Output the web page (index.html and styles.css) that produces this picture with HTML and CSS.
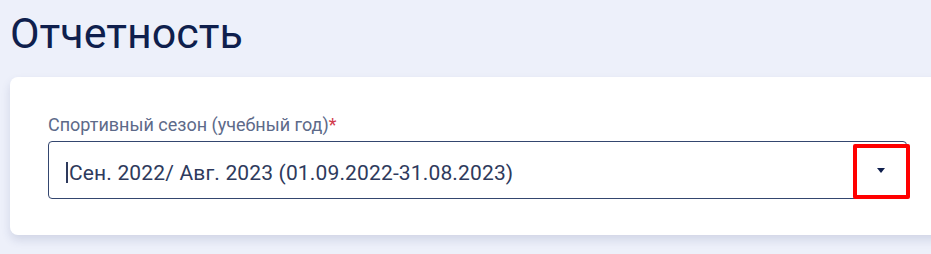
FILE: index.html
```html
<!DOCTYPE html>
<html lang="ru">
<head>
    <meta charset="UTF-8">
    <meta name="viewport" content="width=device-width, initial-scale=1.0">
    <title>Отчетность</title>
    <link rel="stylesheet" href="styles.css">
</head>
<body>
    <h1 class="page-title">Отчетность</h1>

    <div class="card">
        <label class="field-label">Спортивный сезон (учебный год)<span class="req">*</span></label>
        <div class="select">
            <span class="caret"></span>
            <span class="select-value">Сен. 2022/ Авг. 2023 (01.09.2022-31.08.2023)</span>
            <span class="select-arrow"></span>
            <span class="highlight"></span>
        </div>
    </div>
</body>
</html>
```

FILE: styles.css
```css
* {
    margin: 0;
    padding: 0;
    box-sizing: border-box;
}
body {
    font-family: Roboto, "Liberation Sans", sans-serif;
    background-color: #edf0fa;
    padding: 8px 0 0 10px;
    overflow: hidden;
    height: 100vh;
}
.page-title {
    font-size: 43px;
    font-weight: 400;
    line-height: 50px;
    color: #0f1f4d;
    margin-bottom: 19px;
}
.card {
    background-color: #fff;
    border-radius: 8px;
    margin-right: -24px;
    padding: 37px 48px 36px 38px;
    box-shadow: 0 5px 10px rgba(40, 55, 110, 0.14);
}
.field-label {
    display: block;
    font-size: 18px;
    line-height: 21px;
    color: #5d6a89;
    margin-bottom: 6px;
}
.req {
    color: #d23a4c;
}
.select {
    position: relative;
    display: flex;
    align-items: center;
    height: 58px;
    border: 1px solid #34466f;
    border-radius: 4px;
    padding: 5px 0 0 17px;
}
.caret {
    width: 2px;
    height: 21px;
    background-color: #2e3a5c;
}
.select-value {
    flex: 1;
    font-size: 21px;
    letter-spacing: 0.15px;
    color: #2e3a5c;
    margin-left: 1px;
}
.select-arrow {
    width: 0;
    height: 0;
    border-left: 4px solid transparent;
    border-right: 4px solid transparent;
    border-top: 5px solid #0f1f4d;
    margin: -4px 21px 0 0;
}
.highlight {
    position: absolute;
    top: 2px;
    right: -4px;
    bottom: -1px;
    width: 57px;
    border: 4px solid #ff0000;
    border-radius: 2px;
}
```
